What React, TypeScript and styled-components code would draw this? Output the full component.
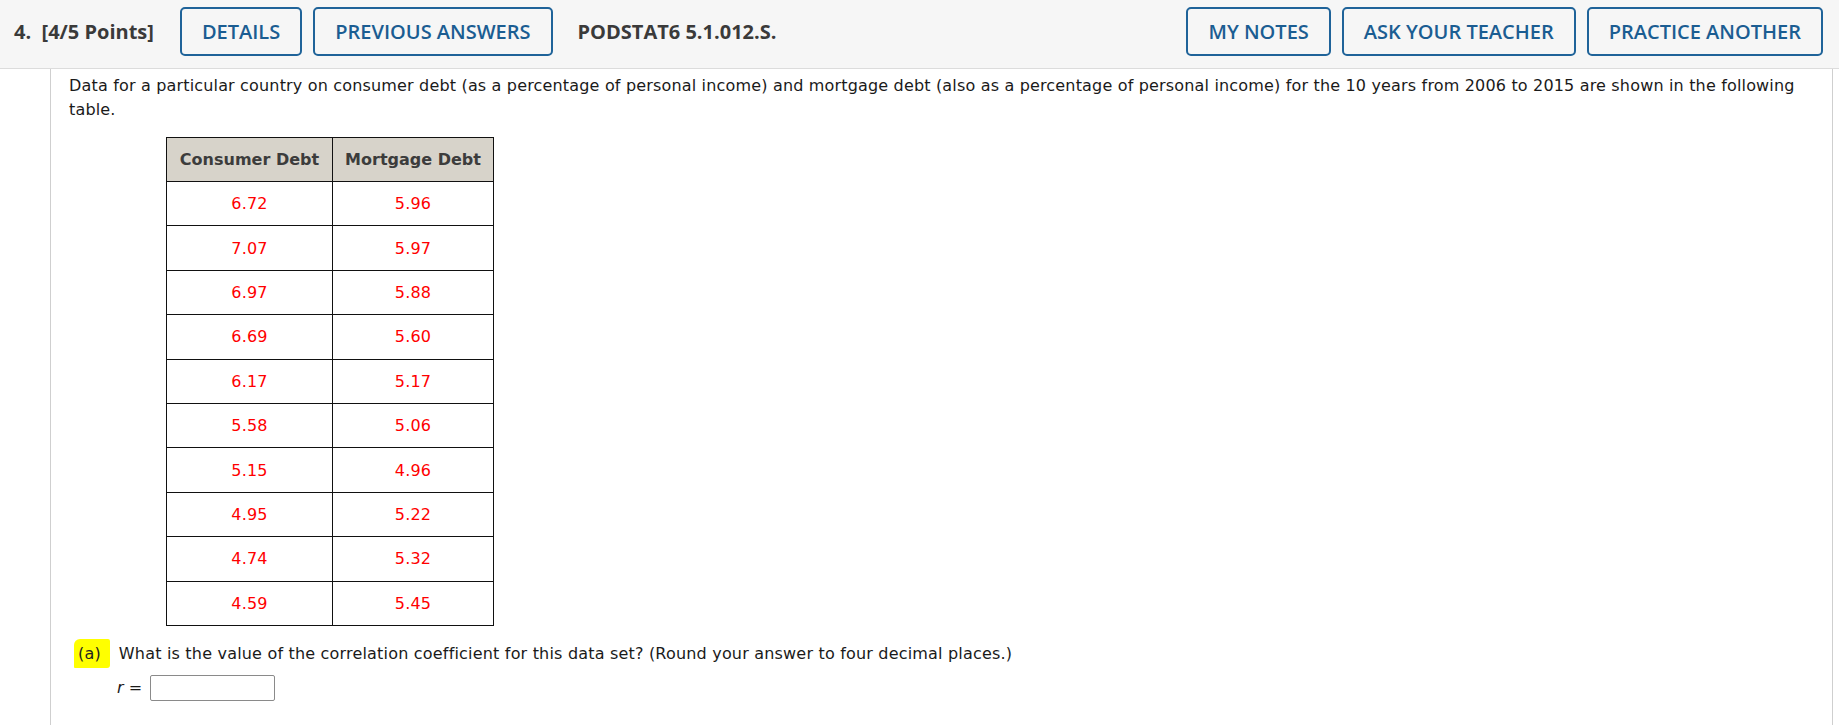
import React from "react";
import styled, { createGlobalStyle } from "styled-components";

const GlobalStyle = createGlobalStyle`
  html, body { margin: 0; padding: 0; background: #ffffff; }
  body { font-family: "DejaVu Sans", Verdana, sans-serif; color: #1a1a1a; }
  * { box-sizing: border-box; }
`;

const Page = styled.div`
  display: flex;
  flex-direction: column;
  min-height: 725px;
`;

const Header = styled.header`
  display: flex;
  align-items: center;
  gap: 11px;
  height: 69px;
  padding: 0 16px 5px 14px;
  background: #f6f6f6;
  border-bottom: 1px solid #dcdcdc;
  font-family: "Open Sans", "Liberation Sans", sans-serif;
`;

const Title = styled.span<{ $before?: number; $after?: number }>`
  font-size: 20px;
  font-weight: 700;
  color: #3a3a3a;
  white-space: pre;
  margin-left: ${(p) => p.$before ?? 0}px;
  margin-right: ${(p) => p.$after ?? 0}px;
`;

const Spacer = styled.div`
  flex: 1;
`;

const HeaderButton = styled.button`
  height: 49px;
  padding: 0 20px;
  border: 2px solid #1f6399;
  border-radius: 5px;
  background: #f6f6f6;
  color: #1b5d92;
  font-family: "Open Sans", "Liberation Sans", sans-serif;
  font-size: 20px;
  font-weight: 600;
  cursor: pointer;
`;

const Panel = styled.main`
  flex: 1;
  margin: 0 6px 0 50px;
  border-left: 1px solid #cfcfcf;
  border-right: 1px solid #cfcfcf;
  padding: 5px 30px 0 18px;
`;

const Paragraph = styled.p`
  margin: 0;
  font-size: 16px;
  line-height: 23.5px;
  letter-spacing: 0.17px;
  color: #1a1a1a;
`;

const DataTable = styled.table`
  margin: 16px 0 0 97px;
  border-collapse: collapse;
  font-size: 16px;
`;

const HeadCell = styled.th<{ $w: number }>`
  width: ${(p) => p.$w}px;
  height: 44px;
  padding: 0;
  background: #d7d3ca;
  border: 1px solid #111;
  color: #3c3c3c;
  font-weight: 700;
  text-align: center;
`;

const Row = styled.tr`
  height: 44.4px;
`;

const Cell = styled.td`
  padding: 0;
  border: 1px solid #111;
  color: #ff0000;
  text-align: center;
  letter-spacing: 0.2px;
`;

const Question = styled.div`
  display: flex;
  align-items: center;
  margin: 13px 0 0 5px;
  font-size: 16px;
  line-height: 23px;
  letter-spacing: 0.19px;
`;

const Mark = styled.span`
  display: inline-flex;
  align-items: center;
  height: 29px;
  padding: 0 9px 0 4px;
  background: #ffff00;
  border-radius: 6px 2px 3px 1px;
  color: #222;
  margin-right: 9px;
`;

const AnswerRow = styled.div`
  display: flex;
  align-items: center;
  gap: 6px;
  margin: 7px 0 0 48px;
  font-size: 16px;
`;

const VarName = styled.span`
  font-style: italic;
`;

const AnswerInput = styled.input`
  width: 125px;
  height: 26px;
  border: 1px solid #8a8a8a;
  border-radius: 2px;
  background: #fff;
  font-size: 15px;
  margin-left: 2px;
`;

const rows: [string, string][] = [
  ["6.72", "5.96"],
  ["7.07", "5.97"],
  ["6.97", "5.88"],
  ["6.69", "5.60"],
  ["6.17", "5.17"],
  ["5.58", "5.06"],
  ["5.15", "4.96"],
  ["4.95", "5.22"],
  ["4.74", "5.32"],
  ["4.59", "5.45"],
];

export default function App() {
  return (
    <>
      <GlobalStyle />
      <Page>
        <Header>
          <Title $after={15}>{"4.  [4/5 Points]"}</Title>
          <HeaderButton>DETAILS</HeaderButton>
          <HeaderButton>PREVIOUS ANSWERS</HeaderButton>
          <Title $before={14}>PODSTAT6 5.1.012.S.</Title>
          <Spacer />
          <HeaderButton>MY NOTES</HeaderButton>
          <HeaderButton>ASK YOUR TEACHER</HeaderButton>
          <HeaderButton>PRACTICE ANOTHER</HeaderButton>
        </Header>
        <Panel>
          <Paragraph>
            Data for a particular country on consumer debt (as a percentage of
            personal income) and mortgage debt (also as a percentage of personal
            income) for the 10 years from 2006 to 2015 are shown in the following
            table.
          </Paragraph>
          <DataTable>
            <thead>
              <tr>
                <HeadCell $w={166}>Consumer Debt</HeadCell>
                <HeadCell $w={161}>Mortgage Debt</HeadCell>
              </tr>
            </thead>
            <tbody>
              {rows.map(([a, b]) => (
                <Row key={a + b}>
                  <Cell>{a}</Cell>
                  <Cell>{b}</Cell>
                </Row>
              ))}
            </tbody>
          </DataTable>
          <Question>
            <Mark>(a)</Mark>
            What is the value of the correlation coefficient for this data set?
            (Round your answer to four decimal places.)
          </Question>
          <AnswerRow>
            <span>
              <VarName>r</VarName> =
            </span>
            <AnswerInput type="text" />
          </AnswerRow>
        </Panel>
      </Page>
    </>
  );
}
